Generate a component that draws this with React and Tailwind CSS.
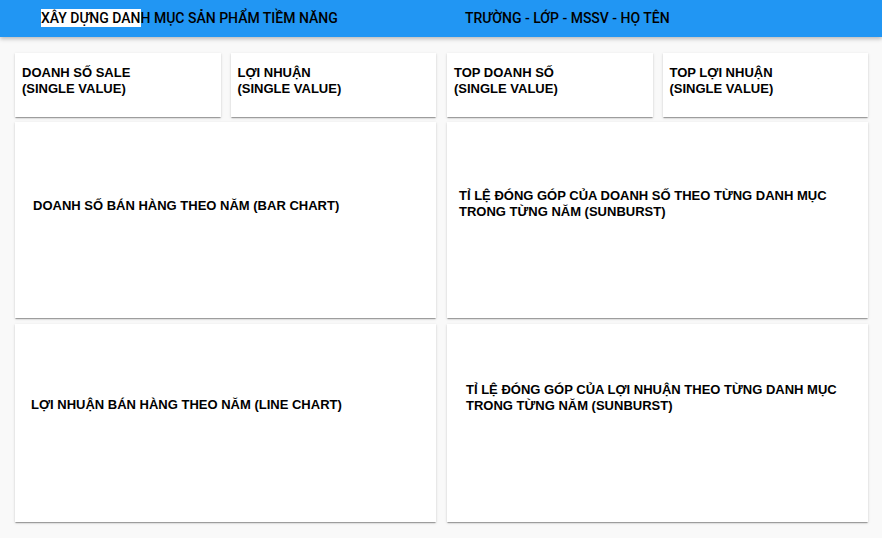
import React from 'react';

const shadow = "shadow-[0_2px_1px_-1px_rgba(0,0,0,0.2),0_1px_1px_0_rgba(0,0,0,0.14),0_1px_3px_0_rgba(0,0,0,0.12)]";

const SmallCard = ({ title }) => (
    <div className={`bg-white h-[64px] pl-[7px] pt-[12px] text-[13px] leading-[16px] font-bold text-black ${shadow}`}>
        <div>{title}</div>
        <div>(SINGLE VALUE)</div>
    </div>
);

const ChartCard = ({ lines, className }) => (
    <div className={`bg-white text-[13px] leading-[16px] font-bold text-black ${shadow} ${className}`}>
        {lines.map((l) => <div key={l}>{l}</div>)}
    </div>
);

const App = () => {
    return (
        <div className="w-[882px] h-[538px] bg-[#f9f9f9] overflow-hidden" style={{ fontFamily: '"Liberation Sans", Arial, sans-serif' }}>
            <div className="h-[37px] bg-[#2196f3] flex items-center text-[14px] font-medium text-black shadow-[0_2px_4px_rgba(0,0,0,0.25)] relative z-10 font-[Roboto,sans-serif]">
                <div className="pl-[41px] w-[465px]">
                    <span className="bg-white py-[1px]">XÂY DỰNG DAN</span>H MỤC SẢN PHẨM TIỀM NĂNG
                </div>
                <div>TRƯỜNG - LỚP - MSSV - HỌ TÊN</div>
            </div>
            <div className="pl-[15px] pr-[14px] pt-[16px] flex flex-col gap-[5px]">
                <div className="grid grid-cols-2 gap-[11px]">
                    <div className="grid grid-cols-2 gap-[10px]">
                        <SmallCard title="DOANH SỐ SALE" />
                        <SmallCard title="LỢI NHUẬN" />
                    </div>
                    <div className="grid grid-cols-2 gap-[10px]">
                        <SmallCard title="TOP DOANH SỐ" />
                        <SmallCard title="TOP LỢI NHUẬN" />
                    </div>
                </div>
                <div className="grid grid-cols-2 gap-[11px] h-[196px]">
                    <ChartCard className="pl-[18px] pt-[76px]" lines={["DOANH SỐ BÁN HÀNG THEO NĂM (BAR CHART)"]} />
                    <ChartCard className="pl-[12px] pt-[66px]" lines={["TỈ LỆ ĐÓNG GÓP CỦA DOANH SỐ THEO TỪNG DANH MỤC", "TRONG TỪNG NĂM (SUNBURST)"]} />
                </div>
                <div className="grid grid-cols-2 gap-[11px] h-[198px] mt-[1px]">
                    <ChartCard className="pl-[16px] pt-[73px]" lines={["LỢI NHUẬN BÁN HÀNG THEO NĂM (LINE CHART)"]} />
                    <ChartCard className="pl-[19px] pt-[58px]" lines={["TỈ LỆ ĐÓNG GÓP CỦA LỢI NHUẬN THEO TỪNG DANH MỤC", "TRONG TỪNG NĂM (SUNBURST)"]} />
                </div>
            </div>
        </div>
    );
};

export default App;
